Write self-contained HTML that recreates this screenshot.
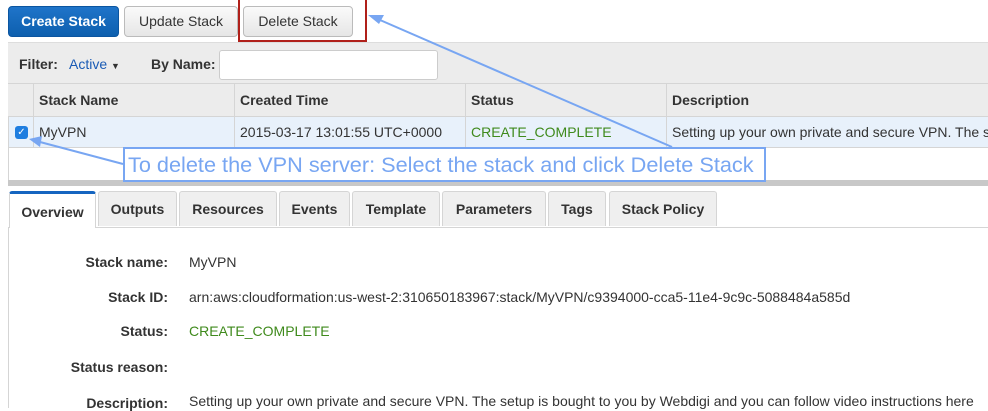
<!DOCTYPE html><html><head><style>
*{margin:0;padding:0;box-sizing:border-box}
body{width:988px;height:408px;overflow:hidden;background:#fff;font-family:"Liberation Sans",Arial,sans-serif;font-size:14px;color:#333;position:relative}
.a{position:absolute}
.btn{position:absolute;top:6px;height:31px;border-radius:4px;border:1px solid #bbb;background:linear-gradient(#fafafa,#e6e6e6);font-size:14px;line-height:29px;text-align:center;color:#333}
.th{position:absolute;top:84px;height:33px;line-height:33px;font-weight:bold;font-size:14px;border-left:1px solid #d5d5d5;padding-left:5px}
.td{position:absolute;top:117px;height:31px;line-height:31px;font-size:14px;border-left:1px solid #d5d5d5;padding-left:5px;white-space:nowrap;overflow:hidden}
.tab{position:absolute;top:191px;height:35px;line-height:34px;background:#efefef;border:1px solid #d5d5d5;border-bottom:none;font-weight:bold;font-size:14px;text-align:center;border-radius:3px 3px 0 0}
.lb{position:absolute;right:820px;font-weight:bold;font-size:14px;white-space:nowrap}
.v{position:absolute;left:189px;font-size:14px;white-space:nowrap}
</style></head><body>
<div class="btn" style="left:8px;width:111px;background:linear-gradient(#1f74c9,#0d5fae);border-color:#0b55a0;color:#fff;font-weight:bold">Create Stack</div>
<div class="btn" style="left:124px;width:114px">Update Stack</div>
<div class="btn" style="left:243px;width:110px">Delete Stack</div>
<div class="a" style="left:238px;top:0;width:129px;height:42px;border:2px solid #b0201a;border-top:none"></div>
<div class="a" style="left:8px;top:42px;width:980px;height:42px;background:#ececec;border-top:1px solid #ddd;border-bottom:1px solid #d5d5d5"></div>
<div class="a" style="left:19px;top:56px;font-weight:bold">Filter:</div>
<div class="a" style="left:69px;top:56px;color:#1a5bb5">Active <span style="font-size:9px;color:#333">▼</span></div>
<div class="a" style="left:151px;top:56px;font-weight:bold">By Name:</div>
<div class="a" style="left:219px;top:50px;width:219px;height:30px;background:#fff;border:1px solid #ccc;border-radius:3px"></div>
<div class="a" style="left:8px;top:84px;width:980px;height:33px;background:#ececec;border-bottom:1px solid #d5d5d5"></div>
<div class="th" style="left:33px;width:200px">Stack Name</div>
<div class="th" style="left:234px;width:231px">Created Time</div>
<div class="th" style="left:465px;width:201px">Status</div>
<div class="th" style="left:666px;width:322px">Description</div>
<div class="a" style="left:8px;top:117px;width:980px;height:31px;background:#e8f1fb;border-bottom:1px solid #d5d5d5"></div>
<div class="a" style="left:15px;top:126px;width:13px;height:13px;border-radius:3px;background:#1f7ee0;color:#fff;font-size:10px;line-height:13px;text-align:center">✓</div>
<div class="td" style="left:33px;width:201px">MyVPN</div>
<div class="td" style="left:234px;width:231px">2015-03-17 13:01:55 UTC+0000</div>
<div class="td" style="left:465px;width:201px;color:#3f8a1c">CREATE_COMPLETE</div>
<div class="td" style="left:666px;width:322px">Setting up your own private and secure VPN. The s</div>
<div class="a" style="left:8px;top:117px;width:1px;height:64px;background:#d5d5d5"></div>
<div class="a" style="left:8px;top:180px;width:980px;height:6px;background:#c8c8c8"></div>
<div class="a" style="left:8px;top:227px;width:980px;height:1px;background:#d5d5d5"></div>
<div class="a" style="left:8px;top:227px;width:1px;height:181px;background:#d5d5d5"></div>
<div class="tab" style="left:9px;width:87px;height:37px;background:#fff;border-top:3px solid #1565c0;line-height:36px">Overview</div>
<div class="tab" style="left:98px;width:79px">Outputs</div>
<div class="tab" style="left:179px;width:98px">Resources</div>
<div class="tab" style="left:279px;width:71px">Events</div>
<div class="tab" style="left:352px;width:88px">Template</div>
<div class="tab" style="left:442px;width:104px">Parameters</div>
<div class="tab" style="left:548px;width:58px">Tags</div>
<div class="tab" style="left:609px;width:108px">Stack Policy</div>
<div class="lb" style="top:254px">Stack name:</div><div class="v" style="top:254px">MyVPN</div>
<div class="lb" style="top:289px">Stack ID:</div><div class="v" style="top:289px">arn:aws:cloudformation:us-west-2:310650183967:stack/MyVPN/c9394000-cca5-11e4-9c9c-5088484a585d</div>
<div class="lb" style="top:323px">Status:</div><div class="v" style="top:323px;color:#3f8a1c">CREATE_COMPLETE</div>
<div class="lb" style="top:359px">Status reason:</div>
<div class="lb" style="top:395px">Description:</div><div class="v" style="top:393px">Setting up your own private and secure VPN. The setup is bought to you by Webdigi and you can follow video instructions here</div>
<div class="a" style="left:123px;top:147px;width:643px;height:35px;border:2px solid #78a6f2;background:#fff;color:#78a6f2;font-size:21.7px;line-height:31px;padding-left:3px;white-space:nowrap">To delete the VPN server: Select the stack and click Delete Stack</div>
<svg class="a" style="left:0;top:0" width="988" height="408">
<g stroke="#78a6f2" stroke-width="2" fill="#78a6f2">
<line x1="672" y1="147" x2="380" y2="20"/>
<polygon points="368,15 384,15 379,24" stroke="none"/>
<line x1="123" y1="164" x2="40" y2="142"/>
<polygon points="29,139 42,136 40,147" stroke="none"/>
</g></svg>
</body></html>
